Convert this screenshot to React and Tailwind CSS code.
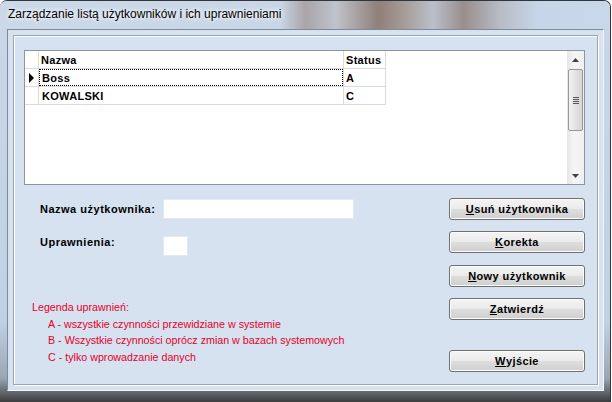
const bold = { fontFamily: '"Liberation Sans", Arial, sans-serif' };

const users = [
  { name: "Boss", status: "A", current: true },
  { name: "KOWALSKI", status: "C", current: false },
];

const legend = [
  "A - wszystkie czynności przewidziane w systemie",
  "B - Wszystkie czynności oprócz zmian w bazach systemowych",
  "C - tylko wprowadzanie danych",
];

function WinButton({ hot, rest, className = "" }) {
  return (
    <button
      type="button"
      className={
        "w-[136px] h-[22px] rounded-[3px] border border-[#707070] bg-[linear-gradient(180deg,#f4f4f4_0%,#ebebeb_48%,#dddddd_52%,#cfcfcf_100%)] shadow-[inset_0_0_0_1px_#fcfcfc] text-[11px] tracking-[0.4px] font-bold text-black flex items-center justify-center " +
        className
      }
      style={bold}
    >
      <span className="underline">{hot}</span>
      {rest}
    </button>
  );
}

function ScrollBar() {
  return (
    <div className="w-[17px] h-full bg-[linear-gradient(90deg,#e6e6e6,#f5f5f5_40%,#f0f0f0)] flex flex-col items-center">
      <div className="h-[17px] w-full flex items-center justify-center">
        <svg width="7" height="4" viewBox="0 0 7 4">
          <path d="M0 4 L3.5 0 L7 4 Z" fill="#404040" />
        </svg>
      </div>
      <div className="w-[15px] h-[62px] mt-[1px] rounded-[2px] border border-[#979797] bg-[linear-gradient(90deg,#f2f2f2,#e2e2e2_50%,#d6d6d6)] flex flex-col items-center justify-center gap-[1px]">
        <div className="w-[6px] h-[1px] bg-[#555]" />
        <div className="w-[6px] h-[1px] bg-[#555]" />
        <div className="w-[6px] h-[1px] bg-[#555]" />
        <div className="w-[6px] h-[1px] bg-[#555]" />
      </div>
      <div className="flex-1" />
      <div className="h-[17px] w-full flex items-center justify-center">
        <svg width="7" height="4" viewBox="0 0 7 4">
          <path d="M0 0 L3.5 4 L7 0 Z" fill="#404040" />
        </svg>
      </div>
    </div>
  );
}

function UserGrid() {
  return (
    <div className="ml-[10px] mr-[12px] mt-[14px] h-[135px] bg-white border border-[#8e959f] flex">
      <div className="flex-1 text-[11px] tracking-[0.3px] font-bold text-black" style={bold}>
        <div className="flex h-[18px] leading-[19px]">
          <div className="w-[14px] border-r border-b border-[#dadada]" />
          <div className="w-[305px] pl-[2px] border-r border-b border-[#dadada]">Nazwa</div>
          <div className="w-[42px] pl-[2px] border-r border-b border-[#dadada]">Status</div>
        </div>
        {users.map((u) => (
          <div key={u.name} className="flex h-[18px] leading-[16px]">
            <div className="w-[14px] border-r border-b border-[#dadada] flex items-center justify-center">
              {u.current && (
                <svg width="5" height="10" viewBox="0 0 5 10">
                  <path d="M0 0 L5 5 L0 10 Z" fill="#000" />
                </svg>
              )}
            </div>
            <div className="w-[305px] border-r border-b border-[#dadada]">
              <div
                className={
                  "h-full pl-[2px] " +
                  (u.current ? "border border-dotted border-black" : "border border-transparent")
                }
              >
                {u.name}
              </div>
            </div>
            <div className="w-[42px] pl-[2px] pt-[1px] border-r border-b border-[#dadada]">{u.status}</div>
          </div>
        ))}
      </div>
      <ScrollBar />
    </div>
  );
}

export default function App() {
  return (
    <div className="w-[612px] h-[402px] bg-white">
      <div className="w-[611px] h-[402px] flex flex-col rounded-t-[7px] border-t border-r border-[#2e3640] bg-[linear-gradient(180deg,#c9d7e7_0%,#bfd1e5_80%,#9aa6b3_94%,#3c3c3c_100%)] overflow-hidden">
        <div className="h-[28px] shrink-0 flex items-center pl-[8px] bg-[linear-gradient(90deg,#cad8e8_0%,#c8d6e6_46%,#a9a5a8_50%,#c0c3cc_55%,#8f8078_62%,#a59a95_66%,#b9c0cb_71%,#9a8e8c_76%,#b7bcc6_82%,#c6d5e7_88%,#c8d8ea_100%)]">
          <span
            className="text-[12px] text-black leading-none -mt-[2px] [text-shadow:0_0_6px_#fff,0_0_4px_#fff]"
            style={{ fontFamily: '"Liberation Sans", Arial, sans-serif' }}
          >
            Zarządzanie listą użytkowników i ich uprawnieniami
          </span>
        </div>
        <div className="flex-1 pl-[7px] pr-[6px] pb-[11px] flex">
          <div className="flex-1 bg-[#d6e2f0] border border-t-[#7d8a99] border-l-[#7d8a99] border-r-[#f4f8fc] border-b-[#f4f8fc] p-[5px]">
            <div className="h-full border border-[#9aa5b2] shadow-[inset_1px_1px_0_#fff,1px_1px_0_#fff] flex flex-col">
              <UserGrid />
              <div className="flex-1 flex">
                <div className="flex-1 pl-[26px] pt-[14px]">
                  <div className="flex items-center h-[20px]">
                    <div className="w-[123px] text-[11px] tracking-[0.5px] font-bold text-black" style={bold}>
                      Nazwa użytkownika:
                    </div>
                    <div className="w-[191px] h-[20px] bg-white border border-[#e2e9f1]" />
                  </div>
                  <div className="flex items-start h-[20px] mt-[17px]">
                    <div className="w-[123px] text-[11px] tracking-[0.5px] leading-[13px] font-bold text-black" style={bold}>
                      Uprawnienia:
                    </div>
                    <div className="w-[25px] h-[20px] bg-white border border-[#e2e9f1]" />
                  </div>
                  <div
                    className="-ml-[8px] mt-[43px] text-[10.7px] leading-[16.5px] text-[#e4002b]"
                    style={{ fontFamily: '"Liberation Sans", Arial, sans-serif' }}
                  >
                    <div>Legenda uprawnień:</div>
                    {legend.map((l) => (
                      <div key={l} className="pl-[16px]">
                        {l}
                      </div>
                    ))}
                  </div>
                </div>
                <div className="w-[136px] mr-[12px] pt-[13px] flex flex-col">
                  <WinButton hot="U" rest="suń użytkownika" />
                  <WinButton hot="K" rest="orekta" className="mt-[11px]" />
                  <WinButton hot="N" rest="owy użytkownik" className="mt-[12px]" />
                  <WinButton hot="Z" rest="atwierdź" className="mt-[11px]" />
                  <WinButton hot="W" rest="yjście" className="mt-[30px]" />
                </div>
              </div>
            </div>
          </div>
        </div>
      </div>
    </div>
  );
}
